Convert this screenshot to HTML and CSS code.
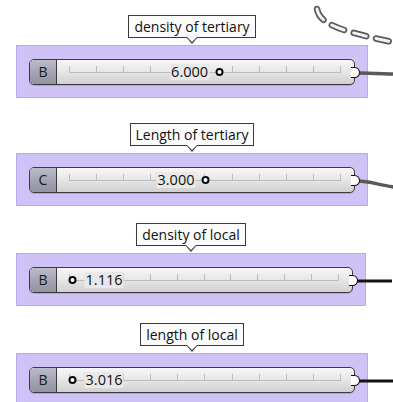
FILE: index.html
```html
<!DOCTYPE html>
<html>
<head>
    <title>Sliders</title>
    <link rel="stylesheet" href="styles.css">
</head>
<body>
    <div class="canvas">
        <svg class="dash-wire" width="393" height="60" viewBox="0 0 393 60">
            <path class="dash-out" d="M317 9 C320 24, 338 31, 402 44"/>
            <path class="dash-in" d="M317 9 C320 24, 338 31, 402 44"/>
        </svg>

        <section class="param">
            <div class="tip">density of tertiary</div>
            <div class="group">
                <div class="slider">
                    <div class="tag">B</div>
                    <div class="rail">
                        <div class="ticks">
                            <i></i><i></i><i></i><i></i><i></i><i></i><i></i><i></i><i></i><i></i>
                        </div>
                        <div class="knob knob-left" style="left: 55%">
                            <span class="value">6.000</span><span class="grip"></span>
                        </div>
                    </div>
                    <span class="port"></span>
                    <svg class="wire grey" width="40" height="30" viewBox="0 0 40 30">
                        <path d="M4 13 C15 13, 25 13.5, 40 14"/>
                    </svg>
                </div>
            </div>
        </section>

        <section class="param spaced">
            <div class="tip">Length of tertiary</div>
            <div class="group">
                <div class="slider">
                    <div class="tag">C</div>
                    <div class="rail">
                        <div class="ticks">
                            <i></i><i></i><i></i><i></i><i></i><i></i><i></i><i></i><i></i><i></i>
                        </div>
                        <div class="knob knob-left" style="left: 50%">
                            <span class="value">3.000</span><span class="grip"></span>
                        </div>
                    </div>
                    <span class="port"></span>
                    <svg class="wire grey" width="40" height="30" viewBox="0 0 40 30">
                        <path d="M4 13 C15 13, 25 17, 40 19"/>
                    </svg>
                </div>
            </div>
        </section>

        <section class="param narrow">
            <div class="tip">density of local</div>
            <div class="group">
                <div class="slider">
                    <div class="tag">B</div>
                    <div class="rail">
                        <div class="ticks">
                            <i></i><i></i><i></i><i></i><i></i><i></i><i></i><i></i><i></i><i></i>
                        </div>
                        <div class="knob" style="left: 1.5%">
                            <span class="grip"></span><span class="value">1.116</span>
                        </div>
                    </div>
                    <span class="port"></span>
                    <svg class="wire black" width="40" height="30" viewBox="0 0 40 30">
                        <path d="M4 13 L40 13"/>
                    </svg>
                </div>
            </div>
        </section>

        <section class="param">
            <div class="tip">length of local</div>
            <div class="group">
                <div class="slider">
                    <div class="tag">B</div>
                    <div class="rail">
                        <div class="ticks">
                            <i></i><i></i><i></i><i></i><i></i><i></i><i></i><i></i><i></i><i></i>
                        </div>
                        <div class="knob" style="left: 1.5%">
                            <span class="grip"></span><span class="value">3.016</span>
                        </div>
                    </div>
                    <span class="port"></span>
                    <svg class="wire black" width="40" height="30" viewBox="0 0 40 30">
                        <path d="M4 13 L40 13"/>
                    </svg>
                </div>
            </div>
        </section>
    </div>
</body>
</html>
```

FILE: styles.css
```css
body {
    margin: 0;
    background: #ffffff;
    font-family: "Open Sans", "Noto Sans", sans-serif;
    color: #111111;
    overflow: hidden;
}
.canvas {
    position: relative;
    width: 393px;
    height: 402px;
    padding-top: 15px;
    box-sizing: border-box;
    overflow: hidden;
}
.dash-wire {
    position: absolute;
    top: 0;
    left: 0;
}
.dash-wire path {
    fill: none;
    stroke-linecap: round;
    stroke-dasharray: 13 10;
}
.dash-out {
    stroke: #5a5a5a;
    stroke-width: 6.5;
}
.dash-in {
    stroke: #f4f4f4;
    stroke-width: 3;
}

.param {
    width: 352px;
    margin-left: 16px;
    display: flex;
    flex-direction: column;
    align-items: center;
}
.param + .param {
    margin-top: 17px;
}
.param.spaced {
    margin-top: 25px;
}
.param.narrow {
    width: 350px;
}

.tip {
    position: relative;
    height: 21px;
    line-height: 21px;
    padding: 0 5px;
    border: 1px solid #3a3a3a;
    background: #fbfbfb;
    font-size: 14px;
    margin-bottom: 7px;
}
.tip::before,
.tip::after {
    content: "";
    position: absolute;
    left: 50%;
    width: 0;
    height: 0;
    border-style: solid;
    border-color: transparent;
}
.tip::before {
    top: 100%;
    margin-left: -6px;
    border-width: 7px 6px 0 6px;
    border-top-color: #3a3a3a;
}
.tip::after {
    top: 100%;
    margin-left: -5px;
    border-width: 5.5px 5px 0 5px;
    border-top-color: #fbfbfb;
}

.group {
    align-self: stretch;
    background: #cfc2f7;
    border: 1px solid #b9a9ea;
    padding: 13px 12px 12px 12px;
}

.slider {
    position: relative;
    display: flex;
    height: 24px;
    border: 1px solid #3a3a3a;
    border-radius: 5px;
    background: linear-gradient(#f7f7f7, #e6e6e6 50%, #d0d0d0);
    box-shadow: 0 1px 0 rgba(0, 0, 0, 0.15);
}
.tag {
    width: 26px;
    flex: none;
    border-right: 1px solid #3a3a3a;
    border-radius: 4px 0 0 4px;
    background: linear-gradient(#bcbcc9, #a4a4b3 50%, #9393a2);
    font-size: 14px;
    line-height: 24px;
    text-align: center;
    color: #1a1a1a;
}
.rail {
    position: relative;
    flex: 1;
    margin: 0 13px 0 12px;
}
.ticks {
    display: flex;
    height: 6px;
    margin-top: 6px;
    border-bottom: 1px solid #bcbcbc;
    border-right: 1px solid #bcbcbc;
}
.ticks i {
    flex: 1;
    border-left: 1px solid #bcbcbc;
}

.knob {
    position: absolute;
    top: 0;
    height: 24px;
    display: flex;
    align-items: center;
    gap: 8px;
    transform: translateX(-4.5px);
}
.knob-left {
    transform: translateX(calc(-100% + 4.5px));
    gap: 6px;
}
.value {
    font-size: 14.5px;
    line-height: 16px;
    padding: 0 1px;
    background: #e8e8e8;
}
.grip {
    width: 4px;
    height: 4px;
    border: 2.5px solid #0a0a0a;
    border-radius: 50%;
    background: #ffffff;
}

.port {
    position: absolute;
    right: -6px;
    top: 6.5px;
    width: 8px;
    height: 9px;
    border: 1.5px solid #111;
    border-left: none;
    border-radius: 0 6px 6px 0;
    background: #ffffff;
    z-index: 2;
}
.wire {
    position: absolute;
    left: 100%;
    top: 0;
    overflow: visible;
}
.wire path {
    fill: none;
}
.wire.grey path {
    stroke: #595959;
    stroke-width: 3.5;
}
.wire.black path {
    stroke: #141414;
    stroke-width: 3;
}
```
